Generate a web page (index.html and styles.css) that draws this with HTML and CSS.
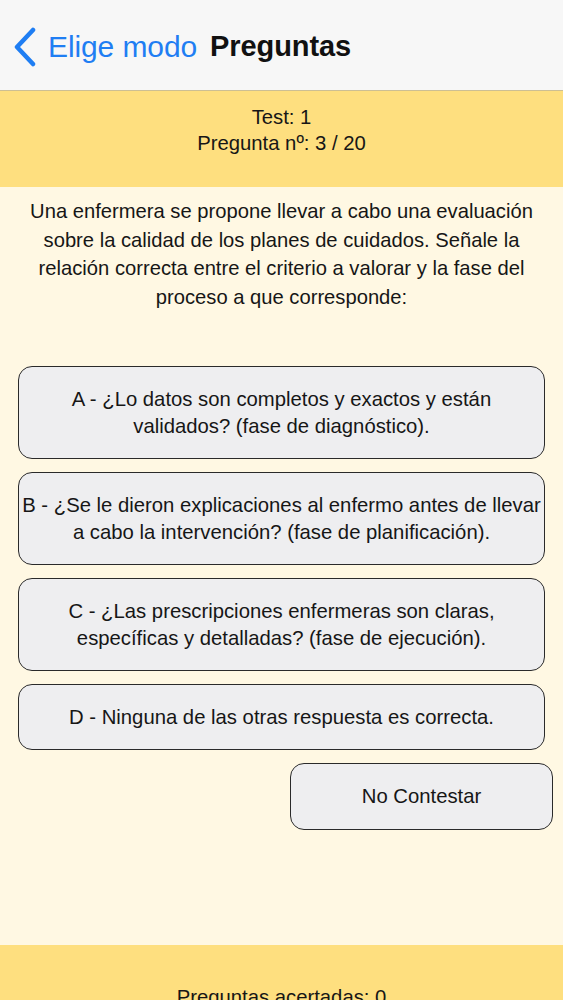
FILE: index.html
```html
<!DOCTYPE html>
<html lang="es">
<head>
<meta charset="utf-8">
<title>Preguntas</title>
<link rel="stylesheet" href="styles.css">
</head>
<body>
<div class="screen">
  <header class="nav">
    <a class="back" href="#">
      <svg class="chevron" width="24" height="40" viewBox="0 0 24 40" aria-hidden="true">
        <path d="M20 3 L4 20 L20 37" fill="none" stroke="#1f7ef3" stroke-width="4.5" stroke-linecap="round" stroke-linejoin="round"/>
      </svg>
      <span class="back-label">Elige modo</span>
    </a>
    <h1 class="title">Preguntas</h1>
  </header>

  <section class="info">
    <div>Test: 1</div>
    <div>Pregunta nº: 3 / 20</div>
  </section>

  <main class="content">
    <p class="question">Una enfermera se propone llevar a cabo una evaluación sobre la calidad de los planes de cuidados. Señale la relación correcta entre el criterio a valorar y la fase del proceso a que corresponde:</p>

    <div class="options">
      <button class="option tall">A - ¿Lo datos son completos y exactos y están<br>validados? (fase de diagnóstico).</button>
      <button class="option tall">B - ¿Se le dieron explicaciones al enfermo antes de llevar<br>a cabo la intervención? (fase de planificación).</button>
      <button class="option tall">C - ¿Las prescripciones enfermeras son claras,<br>específicas y detalladas? (fase de ejecución).</button>
      <button class="option short">D - Ninguna de las otras respuesta es correcta.</button>
    </div>

    <div class="skip-row">
      <button class="option skip">No Contestar</button>
    </div>
  </main>

  <footer class="footer">Preguntas acertadas: 0</footer>
</div>
</body>
</html>
```

FILE: styles.css
```css
html, body {
  margin: 0;
  padding: 0;
}

body {
  background: #fff8e3;
  font-family: "Liberation Sans", Arial, sans-serif;
  color: #161616;
  overflow: hidden;
}

.screen {
  display: flex;
  flex-direction: column;
  height: 1000px;
}

.nav {
  height: 91px;
  box-sizing: border-box;
  background: #f7f7f7;
  border-bottom: 1px solid #cdbf93;
  display: flex;
  align-items: center;
  padding-left: 13px;
  padding-top: 3px;
}

.back {
  display: flex;
  align-items: center;
  text-decoration: none;
  color: #1f7ef3;
}

.chevron {
  display: block;
  margin-right: 11px;
}

.back-label {
  font-size: 30px;
  letter-spacing: -0.1px;
}

.title {
  margin: 0 0 0 13px;
  font-size: 29px;
  font-weight: bold;
  color: #111;
  letter-spacing: -0.1px;
}

.info {
  height: 96px;
  box-sizing: border-box;
  background: #fedf7f;
  text-align: center;
  font-size: 20.3px;
  line-height: 26px;
  padding-top: 13px;
}

.content {
  flex: 1;
  display: flex;
  flex-direction: column;
}

.question {
  margin: 0;
  padding: 10px 20px 0;
  text-align: center;
  font-size: 20.2px;
  line-height: 28.5px;
}

.options {
  margin: 55px 18px 0 18px;
  display: flex;
  flex-direction: column;
  gap: 13px;
}

.option {
  display: flex;
  align-items: center;
  justify-content: center;
  box-sizing: border-box;
  background: #eeeef0;
  border: 1.5px solid #2a2a2a;
  border-radius: 14px;
  font-family: "Liberation Sans", Arial, sans-serif;
  font-size: 20.3px;
  line-height: 27px;
  color: #161616;
  text-align: center;
  padding: 0;
  width: 100%;
  white-space: nowrap;
}

.tall {
  height: 93px;
}

.short {
  height: 66px;
}

.skip-row {
  display: flex;
  justify-content: flex-end;
  margin: 13px 10px 0 0;
}

.skip {
  width: 263px;
  height: 67px;
}

.footer {
  margin-top: auto;
  height: 55px;
  box-sizing: border-box;
  background: #fedf7f;
  text-align: center;
  font-size: 20.3px;
  padding-top: 40px;
  line-height: 24px;
  overflow: hidden;
}
```
